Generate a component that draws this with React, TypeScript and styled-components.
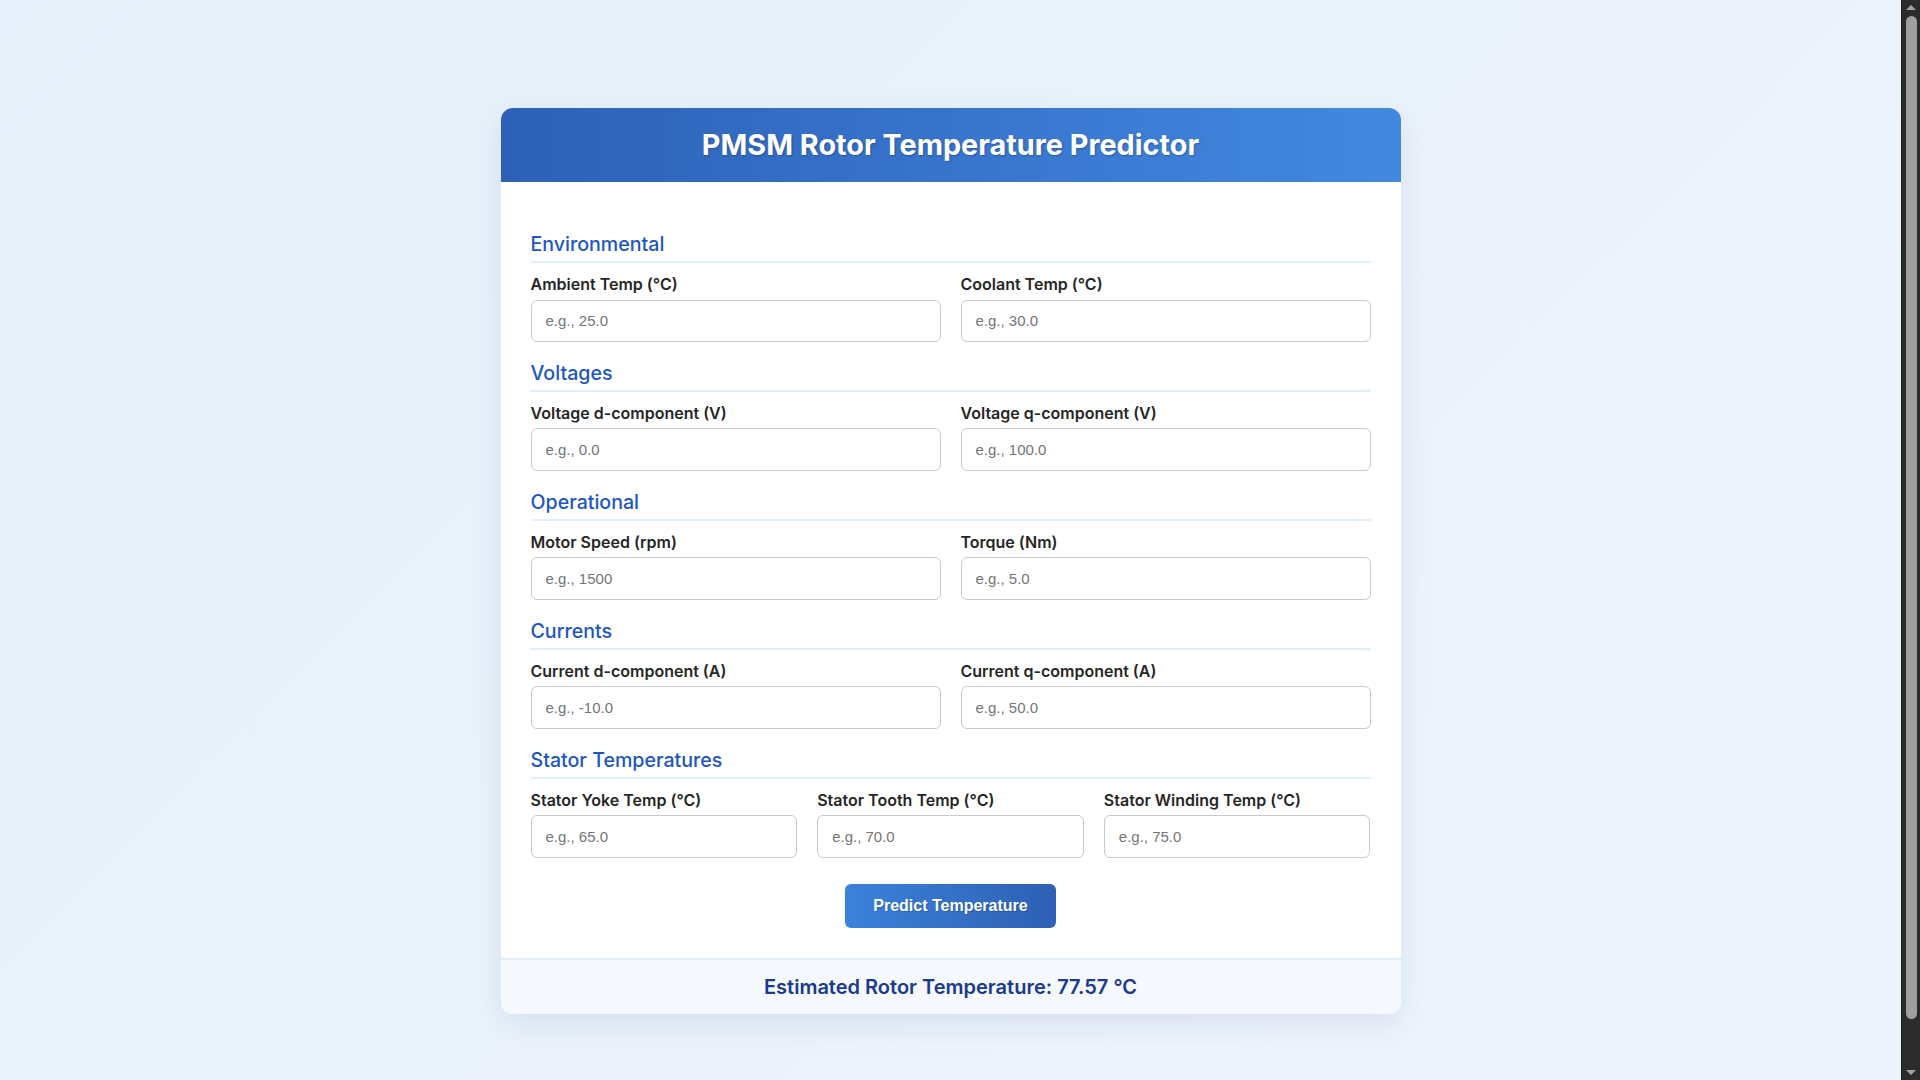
import React from "react"
import styled, { createGlobalStyle } from "styled-components"

const GlobalStyle = createGlobalStyle`
  * {
    box-sizing: border-box;
  }

  html {
    overflow: hidden;
  }

  body {
    margin: 0;
    padding: 21px 39px 19px 20px;
    min-height: 100vh;
    box-sizing: content-box;
    display: flex;
    align-items: center;
    justify-content: center;
    background: linear-gradient(135deg, #e6f0fa 0%, #eef4fd 100%);
    font-family: Inter, "Noto Sans", sans-serif;
    color: #222;
  }

  #root {
    width: 100%;
    display: flex;
    justify-content: center;
  }
`

interface Field {
  label: string
  placeholder: string
}

interface Section {
  title: string
  columns: number
  fields: Field[]
}

const sections: Section[] = [
  {
    title: "Environmental",
    columns: 2,
    fields: [
      { label: "Ambient Temp (°C)", placeholder: "e.g., 25.0" },
      { label: "Coolant Temp (°C)", placeholder: "e.g., 30.0" },
    ],
  },
  {
    title: "Voltages",
    columns: 2,
    fields: [
      { label: "Voltage d-component (V)", placeholder: "e.g., 0.0" },
      { label: "Voltage q-component (V)", placeholder: "e.g., 100.0" },
    ],
  },
  {
    title: "Operational",
    columns: 2,
    fields: [
      { label: "Motor Speed (rpm)", placeholder: "e.g., 1500" },
      { label: "Torque (Nm)", placeholder: "e.g., 5.0" },
    ],
  },
  {
    title: "Currents",
    columns: 2,
    fields: [
      { label: "Current d-component (A)", placeholder: "e.g., -10.0" },
      { label: "Current q-component (A)", placeholder: "e.g., 50.0" },
    ],
  },
  {
    title: "Stator Temperatures",
    columns: 3,
    fields: [
      { label: "Stator Yoke Temp (°C)", placeholder: "e.g., 65.0" },
      { label: "Stator Tooth Temp (°C)", placeholder: "e.g., 70.0" },
      { label: "Stator Winding Temp (°C)", placeholder: "e.g., 75.0" },
    ],
  },
]

/* browser scrollbar as seen in the capture */
const ScrollRail = styled.div`
  position: fixed;
  top: 0;
  right: 0;
  width: 19px;
  height: 100vh;
  background: #2b2b2b;
  border-left: 1px solid #1c1c1c;
`

const ScrollThumb = styled.div`
  position: absolute;
  top: 16px;
  left: 4px;
  width: 11px;
  height: 1003px;
  border-radius: 6px;
  background: #9f9f9f;
`

const ScrollArrow = styled.div<{ $down?: boolean }>`
  position: absolute;
  left: 4px;
  ${p => (p.$down ? "bottom: 5px;" : "top: 5px;")}
  width: 0;
  height: 0;
  border-left: 5px solid transparent;
  border-right: 5px solid transparent;
  ${p =>
    p.$down ? "border-top: 5px solid #a3a3a3;" : "border-bottom: 5px solid #a3a3a3;"}
`

const Card = styled.div`
  width: 900px;
  background: #fff;
  border-radius: 12px;
  overflow: hidden;
  box-shadow: 0 10px 30px rgba(40, 70, 120, 0.1);
`

const Header = styled.header`
  padding: 20px;
  background: linear-gradient(90deg, #2d61b7 0%, #3a78d1 60%, #4189df 100%);
  text-align: center;
`

const Title = styled.h1`
  margin: 0;
  color: #fff;
  font-size: 28.8px;
  font-weight: 700;
  line-height: 34px;
  text-shadow: 1px 1px 2px rgba(0, 0, 0, 0.25);
`

const Form = styled.form`
  padding: 31px 30px 30px;
`

const SectionBlock = styled.section`
  margin-top: 20px;
`

const SectionTitle = styled.h3`
  margin: 0 0 12px;
  padding-bottom: 5px;
  border-bottom: 2px solid #e3eefb;
  color: #1c56c4;
  font-size: 19.6px;
  font-weight: 500;
  line-height: 23px;
`

const FieldGrid = styled.div<{ $columns: number }>`
  display: grid;
  grid-template-columns: repeat(${p => p.$columns}, 1fr);
  gap: 20px;
`

const FieldWrap = styled.div`
  display: flex;
  flex-direction: column;
`

const Label = styled.label`
  margin-bottom: 6px;
  font-size: 16px;
  font-weight: 600;
  line-height: 18.5px;
  color: #262626;
`

const Input = styled.input`
  width: 100%;
  height: 42.4px;
  padding: 0 14px;
  border: 1px solid #cacaca;
  border-radius: 6px;
  font-family: "Liberation Sans", Arial, sans-serif;
  font-size: 15px;
  color: #222;
  background: #fff;
  outline: none;

  &::placeholder {
    color: #757575;
  }
`

const ButtonRow = styled.div`
  display: flex;
  justify-content: center;
  margin-top: 26px;
`

const PredictButton = styled.button`
  padding: 13px 28px;
  border: none;
  border-radius: 6px;
  background: linear-gradient(90deg, #3b82db 0%, #2d60b4 100%);
  color: #fff;
  font-family: "Liberation Sans", Arial, sans-serif;
  font-size: 16px;
  font-weight: 700;
  line-height: 18.4px;
  text-shadow: 1px 1px 1px rgba(0, 0, 0, 0.2);
  cursor: pointer;
`

const Result = styled.div`
  padding: 15px 20px;
  border-top: 2px solid #e2edf9;
  background: #f5f8fd;
  text-align: center;
  color: #1a3a8c;
  font-size: 20px;
  font-weight: 600;
  line-height: 24px;
`

export default function App() {
  return (
    <>
      <GlobalStyle />
      <Card>
        <Header>
          <Title>PMSM Rotor Temperature Predictor</Title>
        </Header>
        <Form onSubmit={e => e.preventDefault()}>
          {sections.map(section => (
            <SectionBlock key={section.title}>
              <SectionTitle>{section.title}</SectionTitle>
              <FieldGrid $columns={section.columns}>
                {section.fields.map(field => (
                  <FieldWrap key={field.label}>
                    <Label>{field.label}</Label>
                    <Input type="number" placeholder={field.placeholder} />
                  </FieldWrap>
                ))}
              </FieldGrid>
            </SectionBlock>
          ))}
          <ButtonRow>
            <PredictButton type="submit">Predict Temperature</PredictButton>
          </ButtonRow>
        </Form>
        <Result>Estimated Rotor Temperature: 77.57 °C</Result>
      </Card>
      <ScrollRail aria-hidden="true">
        <ScrollArrow />
        <ScrollThumb />
        <ScrollArrow $down />
      </ScrollRail>
    </>
  )
}
